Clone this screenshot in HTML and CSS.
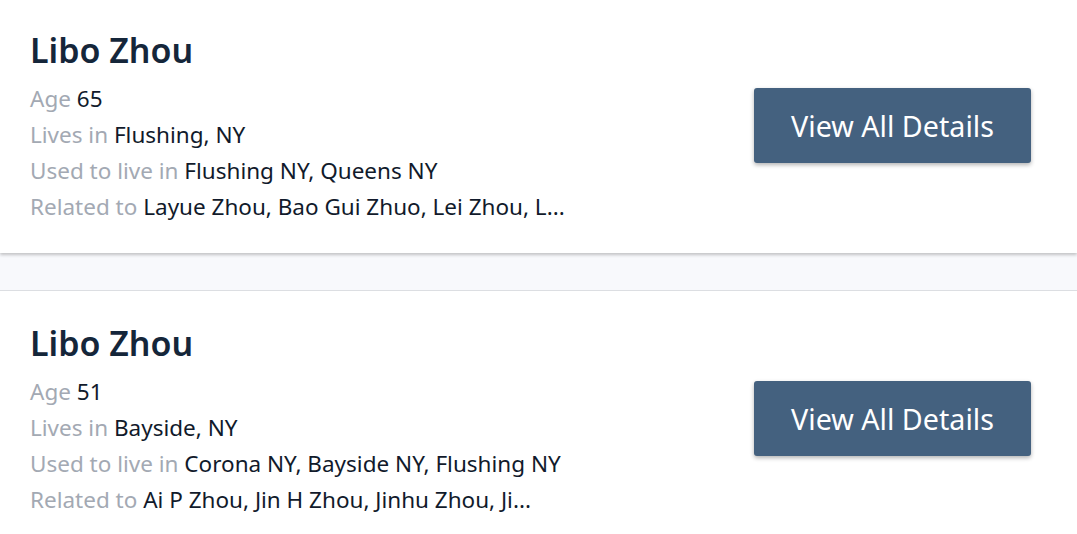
FILE: index.html
```html
<!DOCTYPE html>
<html>
<head>
<meta charset="utf-8">
<link rel="stylesheet" href="styles.css">
</head>
<body>
<div class="list">
  <div class="card card-first">
    <div class="info">
      <h2 class="name">Libo Zhou</h2>
      <div class="row"><span class="label">Age</span> <span class="value">65</span></div>
      <div class="row"><span class="label">Lives in</span> <span class="value">Flushing, NY</span></div>
      <div class="row"><span class="label">Used to live in</span> <span class="value">Flushing NY, Queens NY</span></div>
      <div class="row"><span class="label">Related to</span> <span class="value">Layue Zhou, Bao Gui Zhuo, Lei Zhou, L...</span></div>
    </div>
    <button class="btn">View All Details</button>
  </div>
  <div class="spacer"></div>
  <div class="card card-second">
    <div class="info">
      <h2 class="name">Libo Zhou</h2>
      <div class="row"><span class="label">Age</span> <span class="value">51</span></div>
      <div class="row"><span class="label">Lives in</span> <span class="value">Bayside, NY</span></div>
      <div class="row"><span class="label">Used to live in</span> <span class="value">Corona NY, Bayside NY, Flushing NY</span></div>
      <div class="row"><span class="label">Related to</span> <span class="value">Ai P Zhou, Jin H Zhou, Jinhu Zhou, Ji...</span></div>
    </div>
    <button class="btn">View All Details</button>
  </div>
</div>
</body>
</html>
```
FILE: styles.css
```css
* { box-sizing: border-box; }
html, body { margin: 0; padding: 0; background: #f8f9fc; overflow: hidden; }
body { font-family: "Noto Sans", "Open Sans", sans-serif; }
.list { display: flex; flex-direction: column; }
.card {
  background: #fff;
  display: flex;
  align-items: center;
  justify-content: space-between;
  padding: 30px 46px 28px 30px;
}
.card-first {
  box-shadow: 0 2px 3px rgba(0,0,0,0.22);
  position: relative;
  z-index: 1;
}
.card-second {
  border-top: 1px solid #dcdee2;
  padding-top: 32px;
}
.spacer { height: 37px; background: #f8f9fc; }
.info { display: flex; flex-direction: column; }
.name {
  margin: 0 0 11px;
  font-size: 34px;
  line-height: 40px;
  font-weight: 600;
  color: #15263a;
}
.row {
  font-size: 22.5px;
  line-height: 36px;
  white-space: nowrap;
}
.label { color: #a3a9b3; }
.value { color: #111a2b; }
.btn {
  width: 277px;
  height: 75px;
  margin-top: -4px;
  background: #44617f;
  color: #fff;
  border: none;
  border-radius: 3px;
  font-family: "Noto Sans", "Open Sans", sans-serif;
  font-size: 28.7px;
  box-shadow: 0 2px 4px rgba(0,0,0,0.3);
  padding: 0;
}
```
